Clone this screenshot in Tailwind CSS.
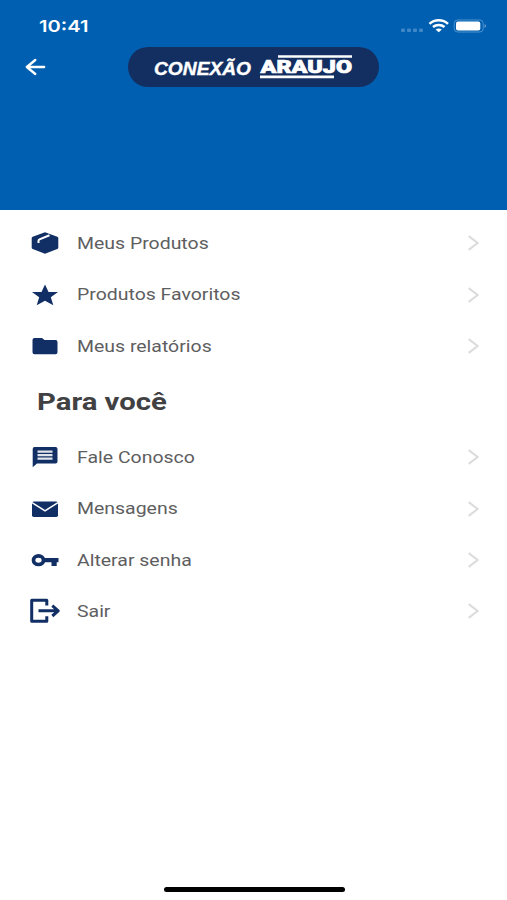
<!DOCTYPE html>
<html lang="pt-BR">
<head>
<meta charset="utf-8">
<title>Conexão Araujo</title>
<script src="https://cdn.jsdelivr.net/npm/@tailwindcss/browser@4"></script>
</head>
<body class="w-[507px] h-[900px] overflow-hidden bg-white font-[Roboto,sans-serif] flex flex-col">
<header class="h-[209.5px] shrink-0 bg-[#005fb0] text-white">
  <div class="h-[47px] pl-[39px] pr-[18px] pt-[6px] flex items-center justify-between">
    <svg class="w-[50px] h-[24px]" viewBox="0 0 50 24"><text x="0" y="17.3" font-family="Inter" font-weight="600" font-size="16.5" fill="#fff" textLength="49.500" lengthAdjust="spacingAndGlyphs">10:41</text></svg>
    <svg class="w-[89px] h-[20px]" viewBox="0 0 89 20" fill="none">
      <g fill="#3e88c9"><rect x="1" y="11.600" width="4" height="3.4" rx="1"/><rect x="7" y="11.600" width="4" height="3.4" rx="1"/><rect x="13" y="11.600" width="4" height="3.4" rx="1"/><rect x="19" y="11.600" width="4" height="3.4" rx="1"/></g>
      <g stroke="#fff" stroke-width="2.5"><path d="M29.500 6.900C34.500 2 43 2 48 6.900"/><path d="M33 10C36.200 7.200 41.300 7.200 44.500 10"/></g>
      <path d="M35.600 12.500C37.500 11 40 11 41.900 12.500L38.800 15.200Z" fill="#fff"/>
      <rect x="54.200" y="3" width="29" height="12" rx="3.400" stroke="#4c92cf" stroke-width="1"/>
      <rect x="56" y="4.500" width="24.300" height="9" rx="2" fill="#fff"/>
      <path d="M84.700 7Q87.200 9 84.700 11Z" fill="#7eb1dd"/>
    </svg>
  </div>
  <div class="h-[40px] flex items-center pl-[25px]">
    <svg class="w-[21px] h-[18px]" viewBox="0 0 21 18" fill="none" stroke="#fff" stroke-width="2.300" stroke-linecap="round" stroke-linejoin="round"><path d="M19.200 9H1.800M10.300 2L1.800 9L10.300 16"/></svg>
    <div class="ml-[82px] w-[251px] h-[40px] rounded-full bg-[#132f62]">
      <svg class="w-[251px] h-[40px]" viewBox="0 0 251 40" fill="#fff">
        <text x="26" y="27.700" font-family="Liberation Sans" font-weight="700" font-style="italic" font-size="18.800" stroke="#fff" stroke-width=".4" textLength="97" lengthAdjust="spacingAndGlyphs">CONEXÃO</text>
        <text x="132.500" y="26" font-family="Roboto" font-weight="900" font-size="17.500" stroke="#fff" stroke-width=".7" textLength="91.500" lengthAdjust="spacingAndGlyphs">ARAUJO</text>
        <path d="M150 8.200H224V10.700H150ZM132 28.600H206V31.200H132Z"/>
      </svg>
    </div>
  </div>
</header>
<main class="pt-[8.400px] text-[16.400px] text-[#5e5e60]">
  <div class="h-[51.200px] pl-[30px] pr-[28px] flex items-center">
    <svg class="w-[30px] h-[26px]" viewBox="0 0 30 26"><path d="M15 2.300L27.300 6.800Q28.300 7.200 28.300 8.200V17.700Q28.300 18.700 27.300 19L15 23.700L2.700 19Q1.700 18.700 1.700 17.700V8.200Q1.700 7.200 2.700 6.800Z" fill="#112f64"/><path d="M8.500 13V10.700Q8.500 9.800 9.500 9.300L19.500 5.200" fill="none" stroke="#fff" stroke-width="2"/></svg>
    <span class="ml-[17px] pt-[2px] origin-left scale-x-[1.187]">Meus Produtos</span>
    <svg class="ml-auto w-[11px] h-[16px]" viewBox="0 0 11 16" fill="none" stroke="#dcdcdd" stroke-width="2.100"><path d="M.7 1.200L9.600 8L.7 14.800"/></svg>
  </div>
  <div class="h-[51.200px] pl-[30px] pr-[28px] flex items-center">
    <svg class="w-[30px] h-[26px]" viewBox="0 0 30 26"><path d="M15 2.500L18.500 10H28L20.800 15.200L23.300 23.300L15 18.700L6.700 23.300L9.200 15.200L2 10H11.500Z" fill="#112f64"/></svg>
    <span class="ml-[17px] pt-[2px] origin-left scale-x-[1.187]">Produtos Favoritos</span>
    <svg class="ml-auto w-[11px] h-[16px]" viewBox="0 0 11 16" fill="none" stroke="#dcdcdd" stroke-width="2.100"><path d="M.7 1.200L9.600 8L.7 14.800"/></svg>
  </div>
  <div class="h-[51.200px] pl-[30px] pr-[28px] flex items-center">
    <svg class="w-[30px] h-[26px]" viewBox="0 0 30 26"><path d="M4.500 5H12L14.500 7H25.500Q27.500 7 27.500 9V19.300Q27.500 21.300 25.500 21.300H4.500Q2.500 21.300 2.500 19.300V7Q2.500 5 4.500 5Z" fill="#112f64"/></svg>
    <span class="ml-[17px] pt-[2px] origin-left scale-x-[1.187]">Meus relatórios</span>
    <svg class="ml-auto w-[11px] h-[16px]" viewBox="0 0 11 16" fill="none" stroke="#dcdcdd" stroke-width="2.100"><path d="M.7 1.200L9.600 8L.7 14.800"/></svg>
  </div>
  <h2 class="h-[60.400px] pl-[37px] flex items-center text-[24px] font-bold text-[#414143]"><span class="origin-left scale-x-[1.220]">Para você</span></h2>
  <div class="h-[51.200px] pl-[30px] pr-[28px] flex items-center">
    <svg class="w-[30px] h-[26px]" viewBox="0 0 30 26"><path d="M4.500 3H25.500Q27.500 3 27.500 5V17.500Q27.500 19.500 25.500 19.500H7L2.700 23.300V5Q2.700 3 4.500 3Z" fill="#112f64"/><path d="M7.500 7.700H22.500M7.500 11.200H22.500M7.500 14.700H22.500" stroke="#dfe3ec" stroke-width="2.200"/></svg>
    <span class="ml-[17px] pt-[2px] origin-left scale-x-[1.187]">Fale Conosco</span>
    <svg class="ml-auto w-[11px] h-[16px]" viewBox="0 0 11 16" fill="none" stroke="#dcdcdd" stroke-width="2.100"><path d="M.7 1.200L9.600 8L.7 14.800"/></svg>
  </div>
  <div class="h-[51.200px] pl-[30px] pr-[28px] flex items-center">
    <svg class="w-[30px] h-[26px]" viewBox="0 0 30 26"><rect x="2" y="5.500" width="26" height="15.500" rx="1.800" fill="#112f64"/><path d="M2 6.700L15 14.800L28 6.700" fill="none" stroke="#fff" stroke-width="1.500"/></svg>
    <span class="ml-[17px] pt-[2px] origin-left scale-x-[1.187]">Mensagens</span>
    <svg class="ml-auto w-[11px] h-[16px]" viewBox="0 0 11 16" fill="none" stroke="#dcdcdd" stroke-width="2.100"><path d="M.7 1.200L9.600 8L.7 14.800"/></svg>
  </div>
  <div class="h-[51.200px] pl-[30px] pr-[28px] flex items-center">
    <svg class="w-[30px] h-[26px]" viewBox="0 0 30 26"><ellipse cx="8.500" cy="13.200" rx="5" ry="4.300" fill="none" stroke="#112f64" stroke-width="3.700"/><path d="M14 11.100H28.500V15.300H26.700V19H21.500V15.300H14Z" fill="#112f64"/></svg>
    <span class="ml-[17px] pt-[2px] origin-left scale-x-[1.187]">Alterar senha</span>
    <svg class="ml-auto w-[11px] h-[16px]" viewBox="0 0 11 16" fill="none" stroke="#dcdcdd" stroke-width="2.100"><path d="M.7 1.200L9.600 8L.7 14.800"/></svg>
  </div>
  <div class="h-[51.200px] pl-[30px] pr-[28px] flex items-center">
    <svg class="w-[30px] h-[26px]" viewBox="0 0 30 26" fill="none" stroke="#112f64" stroke-width="3" stroke-linejoin="round"><path d="M16.800 7.500V2.300H1.700V23.300H16.800V18.300"/><path d="M8.500 12.800H28M22.300 7.600L28.200 12.800L22.300 18"/></svg>
    <span class="ml-[17px] pt-[2px] origin-left scale-x-[1.187]">Sair</span>
    <svg class="ml-auto w-[11px] h-[16px]" viewBox="0 0 11 16" fill="none" stroke="#dcdcdd" stroke-width="2.100"><path d="M.7 1.200L9.600 8L.7 14.800"/></svg>
  </div>
</main>
<div class="mt-auto mb-[8px] ml-[163.500px] w-[181px] h-[5px] rounded-full bg-black"></div>
</body>
</html>
